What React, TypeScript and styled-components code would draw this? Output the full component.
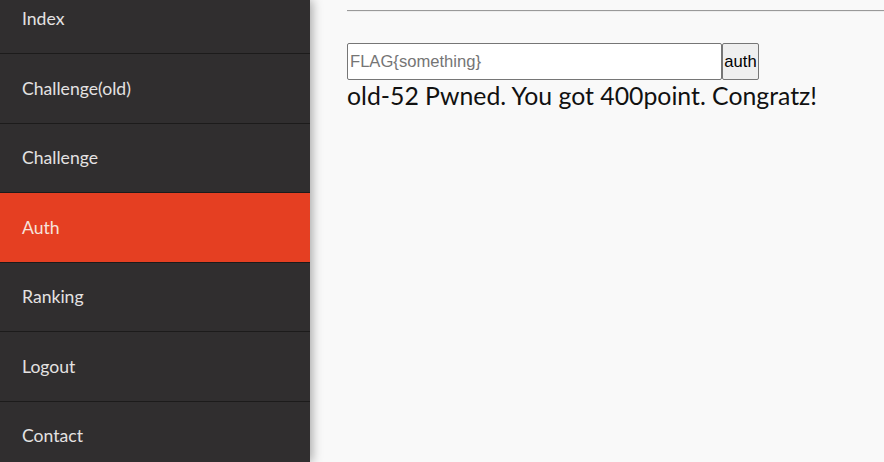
import React from "react";
import styled, { createGlobalStyle } from "styled-components";

const Global = createGlobalStyle`
  html, body { margin: 0; padding: 0; background: #f9f9f9; }
  body { font-family: Lato, "Open Sans", sans-serif; overflow: hidden; }
`;

const Page = styled.div`
  display: flex;
  height: 462px;
  width: 884px;
  overflow: hidden;
`;

const Sidebar = styled.nav`
  width: 310px;
  flex: 0 0 310px;
  background: #302e2f;
  box-shadow: 2px 0 10px rgba(0, 0, 0, 0.35);
  overflow: hidden;
  position: relative;
  z-index: 1;
`;

const Menu = styled.ul`
  list-style: none;
  margin: -15.5px 0 0;
  padding: 0;
`;

const Item = styled.li<{ $active?: boolean }>`
  height: 68.5px;
  border-bottom: 1px solid #1c1b1b;
  background: ${(p) => (p.$active ? "#e53f22" : "#302e2f")};
  color: ${(p) => (p.$active ? "#f6e3dc" : "#e4e2e2")};
  display: flex;
  align-items: center;
  padding-left: 22px;
  font-size: 17.6px;
`;

const Main = styled.main`
  flex: 1;
  padding: 10px 0 0 37px;
`;

const Rule = styled.div`
  height: 0;
  border-top: 1px solid #9a9a9a;
  border-bottom: 1px solid #eeeeee;
  margin: 0 0 31px;
`;

const Form = styled.form`
  display: flex;
  margin: 0;
`;

const Input = styled.input`
  box-sizing: border-box;
  width: 375px;
  height: 37px;
  border: 1px solid #767676;
  border-radius: 2px;
  padding: 0 2px;
  font-family: Arial, "Liberation Sans", sans-serif;
  font-size: 16.6px;
  background: #fff;
  &::placeholder { color: #757575; }
`;

const Button = styled.button`
  box-sizing: border-box;
  height: 37px;
  width: 37px;
  padding: 0;
  border: 1px solid #767676;
  border-radius: 2px;
  background: #efefef;
  color: #000;
  font-family: Arial, "Liberation Sans", sans-serif;
  font-size: 16.6px;
`;

const Message = styled.div`
  font-size: 24.8px;
  color: #111;
  line-height: 32px;
  margin-top: 0;
`;

const items = ["Index", "Challenge(old)", "Challenge", "Auth", "Ranking", "Logout", "Contact"];

export default function App() {
  return (
    <Page>
      <Global />
      <Sidebar>
        <Menu>
          {items.map((it) => (
            <Item key={it} $active={it === "Auth"}>
              {it}
            </Item>
          ))}
        </Menu>
      </Sidebar>
      <Main>
        <Rule />
        <Form onSubmit={(e) => e.preventDefault()}>
          <Input placeholder="FLAG{something}" />
          <Button type="submit">auth</Button>
        </Form>
        <Message>old-52 Pwned. You got 400point. Congratz!</Message>
      </Main>
    </Page>
  );
}
